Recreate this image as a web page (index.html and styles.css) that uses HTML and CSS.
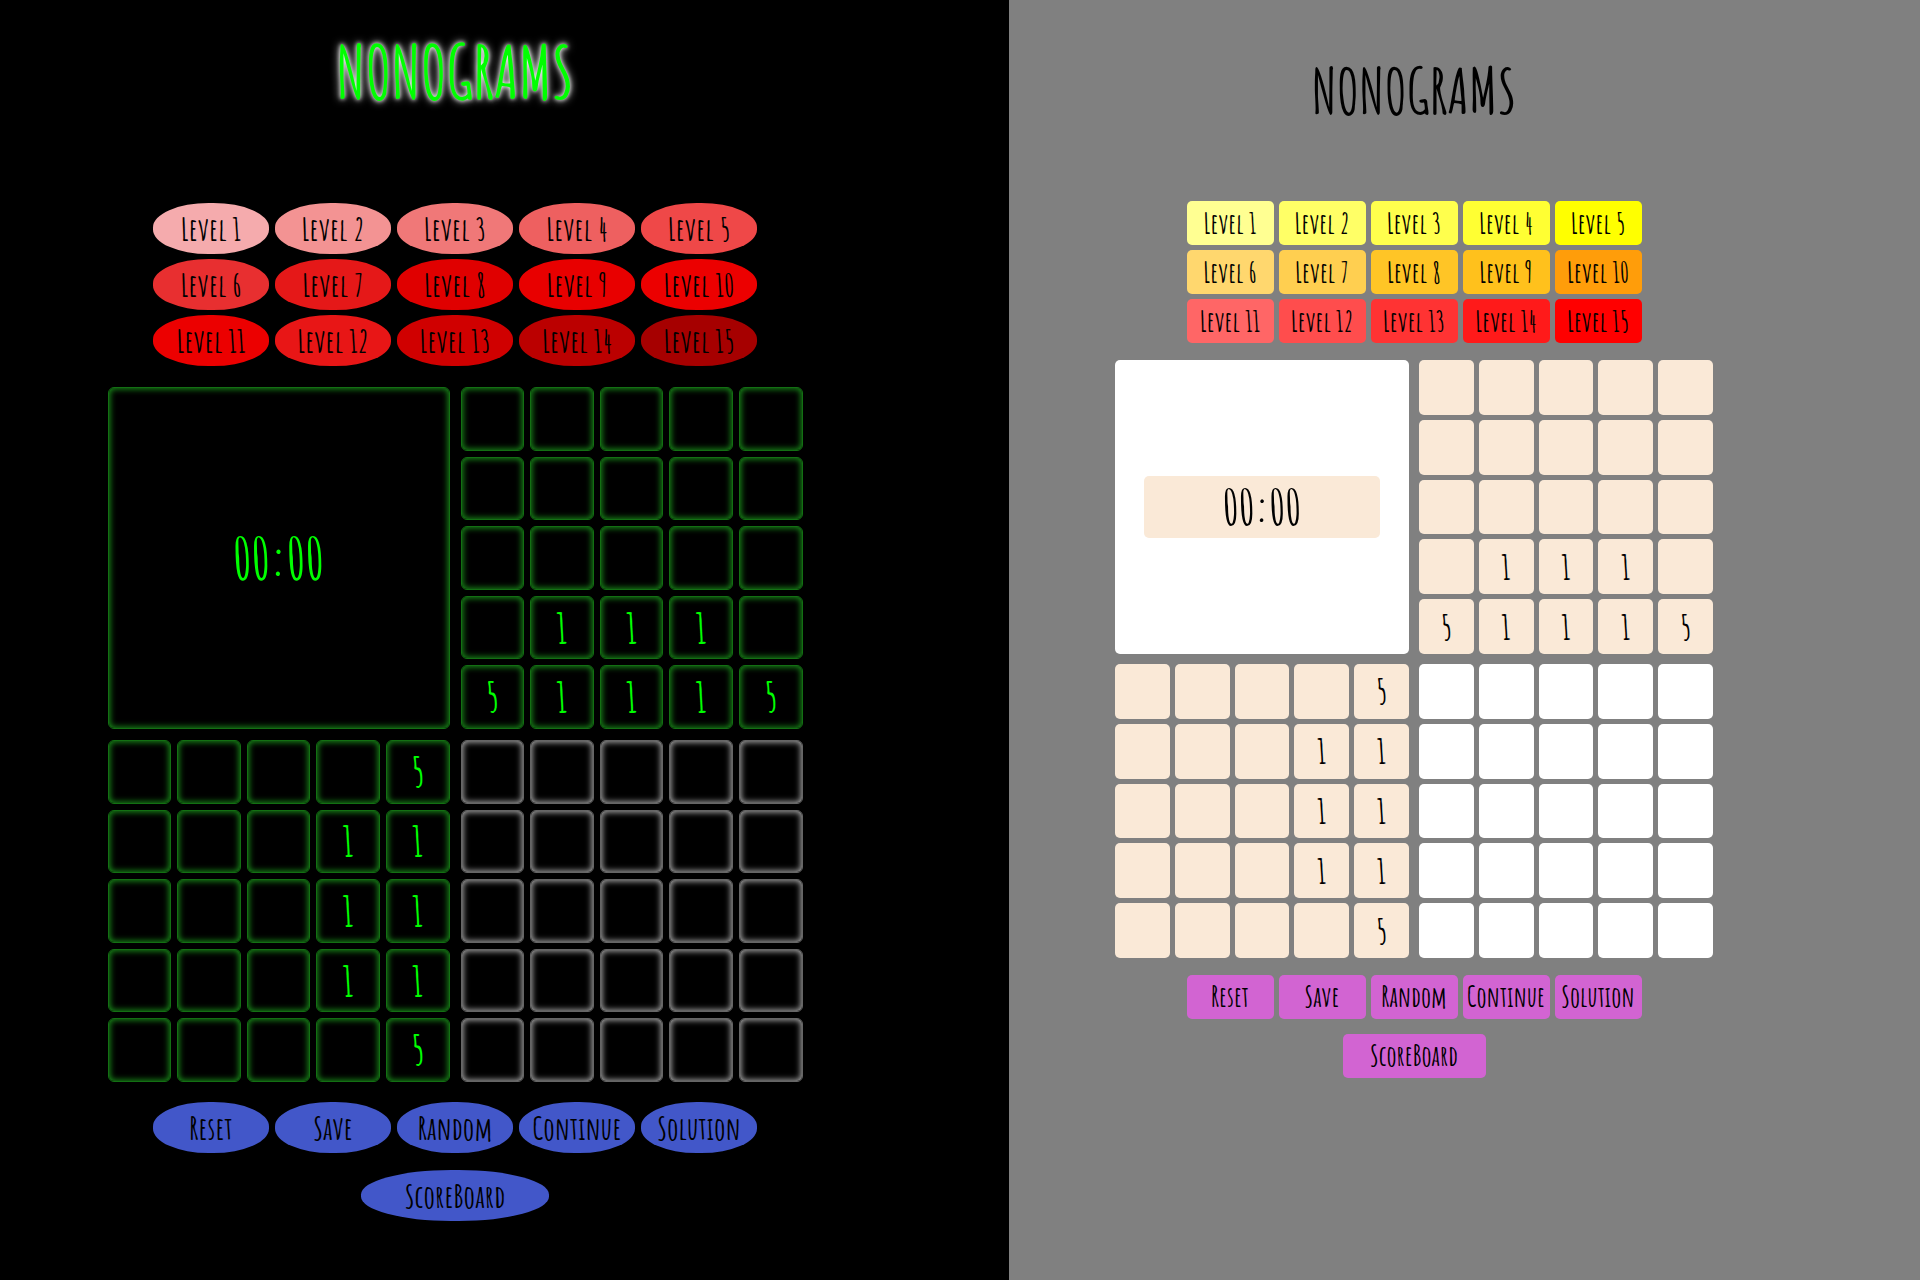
FILE: index.html
```html
<!DOCTYPE html>
<html lang="en">
<head>
<meta charset="utf-8">
<meta name="viewport" content="width=device-width, initial-scale=1">
<title>Nonograms</title>
<link rel="stylesheet" href="styles.css">
<script src="script.js" defer></script>
</head>
<body>
<main class="themes">
  <section class="game dark">
    <h1 class="title">NONOGRAMS</h1>
    <div class="levels"></div>
    <div class="board">
      <div class="timer"><time class="clock">00:00</time></div>
      <div class="cells top"></div>
      <div class="cells side"></div>
      <div class="cells field"></div>
    </div>
    <div class="actions">
      <button type="button">Reset</button>
      <button type="button">Save</button>
      <button type="button">Random</button>
      <button type="button">Continue</button>
      <button type="button">Solution</button>
    </div>
    <button type="button" class="score">ScoreBoard</button>
  </section>
  <section class="game light">
    <h1 class="title">NONOGRAMS</h1>
    <div class="levels"></div>
    <div class="board">
      <div class="timer"><time class="clock">00:00</time></div>
      <div class="cells top"></div>
      <div class="cells side"></div>
      <div class="cells field"></div>
    </div>
    <div class="actions">
      <button type="button">Reset</button>
      <button type="button">Save</button>
      <button type="button">Random</button>
      <button type="button">Continue</button>
      <button type="button">Solution</button>
    </div>
    <button type="button" class="score">ScoreBoard</button>
  </section>
</main>
</body>
</html>
```
FILE: styles.css
```css
* { box-sizing: border-box; }

body {
  margin: 0;
  font-family: "Amatic SC", "Liberation Sans Narrow", "Liberation Sans", sans-serif;
  font-weight: 700;
}

button {
  padding: 0;
  border: 0;
  font: inherit;
  color: inherit;
  cursor: pointer;
}

.themes {
  display: grid;
  grid-template-columns: 1009fr 911fr;
  min-height: 100vh;
}

.game {
  display: flex;
  flex-direction: column;
  align-items: center;
}

.dark {
  --block: 342px;
  --board-gap: 11px;
  --cell-gap: 6px;
  --button-w: 116px;
  --button-h: 51px;
  --button-gap: 6px;
  --button-radius: 48%;
  padding: 32px 99px 56px 0;
  background: #000;
}

.light {
  --block: 294px;
  --board-gap: 10px;
  --cell-gap: 5px;
  --button-w: 87px;
  --button-h: 44px;
  --button-gap: 5px;
  --button-radius: 5px;
  padding: 52px 101px 56px 0;
  background: #808080;
}

.title {
  margin: 0;
  font-weight: 700;
}

.dark .title {
  height: 171px;
  font-size: 72px;
  line-height: 80px;
  color: #0f0;
  text-shadow: 0 0 8px #fff, 0 0 4px #fff;
}

.light .title {
  height: 149px;
  font-size: 62px;
  line-height: 76px;
}

.levels,
.actions {
  display: grid;
  grid-template-columns: repeat(5, var(--button-w));
  column-gap: var(--button-gap);
  row-gap: 5px;
}

.levels button,
.actions button,
.score {
  height: var(--button-h);
  border-radius: var(--button-radius);
  white-space: nowrap;
  color: #000;
}

.dark button { font-size: 32px; }
.light button { font-size: 28px; }

.board {
  display: grid;
  grid-template-columns: repeat(2, var(--block));
  gap: var(--board-gap);
}

.dark .board { margin: 21px 0 20px; }
.light .board { margin: 17px 0; }

.timer {
  display: flex;
  align-items: center;
  justify-content: center;
  border-radius: 5px;
}

.cells {
  display: grid;
  grid-template-columns: repeat(5, 1fr);
  gap: var(--cell-gap);
}

.cell {
  display: flex;
  align-items: center;
  justify-content: center;
  aspect-ratio: 1;
  min-height: 0;
  border-radius: 5px;
  line-height: 1;
}

.dark .timer,
.dark .cell {
  border: 1px solid #137013;
  border-radius: 6px;
  background: #000;
  box-shadow: inset 0 0 6px 1px #1a921a;
  color: #0f0;
}

.dark .field .cell {
  border-color: #666;
  box-shadow: inset 0 0 6px 1px #b4b4b4;
}

.dark .cell { font-size: 40px; }
.dark .clock { font-size: 58px; }

.light .timer,
.light .field .cell { background: #fff; }

.light .cell {
  font-size: 34px;
  background: #fae9d7;
}

.light .clock {
  width: 80%;
  border-radius: 5px;
  font-size: 50px;
  line-height: 62px;
  text-align: center;
  background: #fae9d7;
}

.dark .actions button,
.dark .score { background: #4257c9; }
.light .actions button,
.light .score { background: #d264d2; }

.dark .score { width: 188px; margin-top: 17px; }
.light .score { width: 143px; margin-top: 15px; }
```
FILE: script.js
```js
const levelColors = {
  dark: [
    "#f5abad", "#f39393", "#f07878", "#ee6060", "#ef4848",
    "#e82f30", "#e51818", "#e00000", "#e80000", "#ec0000",
    "#ec0000", "#e81616", "#d00000", "#bb0000", "#a60000"
  ],
  light: [
    "#ffff92", "#ffff66", "#ffff4d", "#ffff33", "#ffff00",
    "#ffd76e", "#ffcf50", "#ffc526", "#ffc11c", "#ff9d0a",
    "#ff6666", "#ff4d4d", "#ff3333", "#ff1a1a", "#ff0000"
  ]
};

const topClues = [
  ["", "", "", "", ""],
  ["", "", "", "", ""],
  ["", "", "", "", ""],
  ["", 1, 1, 1, ""],
  [5, 1, 1, 1, 5]
];

const sideClues = [
  ["", "", "", "", 5],
  ["", "", "", 1, 1],
  ["", "", "", 1, 1],
  ["", "", "", 1, 1],
  ["", "", "", "", 5]
];

function addCell(parent, tag, text) {
  const cell = document.createElement(tag);
  cell.className = "cell";
  cell.textContent = text;
  parent.append(cell);
  return cell;
}

for (const theme of Object.keys(levelColors)) {
  const game = document.querySelector("." + theme);

  levelColors[theme].forEach((color, i) => {
    const button = document.createElement("button");
    button.type = "button";
    button.textContent = "Level " + (i + 1);
    button.style.backgroundColor = color;
    game.querySelector(".levels").append(button);
  });

  topClues.flat().forEach(n => addCell(game.querySelector(".top"), "div", n));
  sideClues.flat().forEach(n => addCell(game.querySelector(".side"), "div", n));

  for (let i = 0; i < 25; i++) {
    const cell = addCell(game.querySelector(".field"), "button", "");
    cell.type = "button";
    cell.setAttribute("aria-label", `Row ${Math.floor(i / 5) + 1}, column ${i % 5 + 1}`);
  }
}
```
